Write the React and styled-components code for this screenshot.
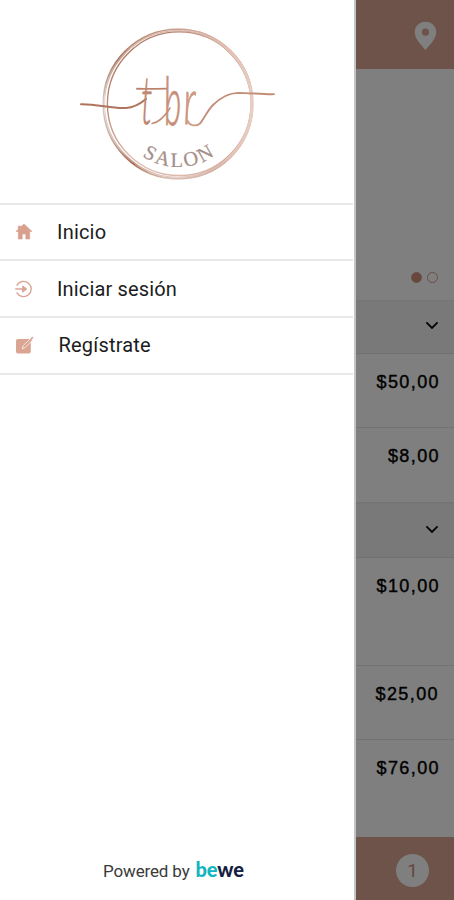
import React from 'react'
import styled, { createGlobalStyle } from 'styled-components'

const GlobalStyle = createGlobalStyle`
    * { box-sizing: border-box; }
    body {
        margin: 0;
        background: #fff;
        font-family: Roboto, "Liberation Sans", sans-serif;
    }
`

const Screen = styled.div`
    display: flex;
    width: 454px;
    height: 900px;
    overflow: hidden;
`

const Drawer = styled.nav`
    display: flex;
    flex-direction: column;
    width: 356px;
    background: #fff;
    border-right: 2px solid #c4c4c4;
`

const LogoBox = styled.div`
    height: 202.6px;
    svg { display: block; }
`

const Menu = styled.ul`
    list-style: none;
    margin: 0 1px 0 0;
    padding: 0;
    border-top: 2px solid #e9e9e9;
`

const MenuItem = styled.li`
    display: flex;
    align-items: center;
    height: 56.7px;
    padding-left: 14px;
    border-bottom: 2px solid #e9e9e9;
    svg { flex: none; }
`

const MenuLabel = styled.span`
    margin-left: ${props => props.$indent || 23}px;
    font-size: 20px;
    line-height: 24px;
    letter-spacing: ${props => props.$spacing || 0}px;
    color: #1c1c1c;
`

const Powered = styled.div`
    display: flex;
    align-items: baseline;
    margin-top: auto;
    padding: 0 0 18px 103px;
    font-size: 17px;
    line-height: 22px;
    letter-spacing: -0.15px;
    color: #3a3a3a;
`

const Brand = styled.span`
    margin-left: 6px;
    font-family: Lato, sans-serif;
    font-weight: 900;
    font-size: 20px;
    letter-spacing: -0.1px;
    color: #12b5c0;
    b { color: #14203f; font-weight: 900; }
`

const Page = styled.main`
    position: relative;
    display: flex;
    flex-direction: column;
    flex: 1;
    background: #fff;
`

const Scrim = styled.div`
    position: absolute;
    inset: 0;
    background: rgba(0, 0, 0, 0.5);
`

const TopBar = styled.header`
    display: flex;
    justify-content: flex-end;
    height: 69px;
    padding: 21px 17px 0 0;
    background: #dba792;
`

const Slider = styled.div`
    display: flex;
    justify-content: flex-end;
    align-items: flex-end;
    gap: 5px;
    height: 231px;
    padding: 0 16px 17px 0;
`

const Dot = styled.span`
    width: 11px;
    height: 11px;
    border-radius: 50%;
    border: 1.5px solid #d39c8b;
    background: ${props => props.$active ? '#d08f7b' : 'transparent'};
`

const Section = styled.div`
    display: flex;
    justify-content: flex-end;
    align-items: center;
    height: ${props => props.$height}px;
    padding: 0 15px 3px 0;
    background: #f3f3f3;
    border-top: 1px solid #ececec;
    border-bottom: 1px solid #e0e0e0;
`

const PriceRow = styled.div`
    height: ${props => props.$height}px;
    padding: 17px ${props => props.$right || 14}px 0 0;
    border-bottom: ${props => props.$last ? 'none' : '1px solid #e6e6e6'};
    text-align: right;
    font-family: "Liberation Sans", Arial, sans-serif;
    font-size: 18px;
    line-height: 22px;
    letter-spacing: 1.4px;
    color: #000;
    -webkit-text-stroke: 0.4px #000;
`

const BottomBar = styled.footer`
    display: flex;
    justify-content: flex-end;
    height: 63px;
    padding: 17px 25px 0 0;
    background: #dba792;
`

const Count = styled.span`
    width: 33px;
    height: 33px;
    border-radius: 50%;
    background: #fff;
    color: #cf907b;
    font-size: 19px;
    line-height: 34px;
    text-align: center;
`

const Initial = styled.text`
    font-family: Lato, sans-serif;
    font-style: italic;
    font-weight: 300;
    fill: ${props => props.$tone};
    stroke: ${props => props.$tone};
    stroke-width: ${props => props.$weight || 0.4}px;
`

const Logo = () => (
    <svg width="353" height="203" viewBox="0 0 353 203">
        <defs>
            <linearGradient id="ring" x1="0.1" y1="0" x2="0.85" y2="1">
                <stop offset="0" stopColor="#a9745f" />
                <stop offset="0.3" stopColor="#bd8c79" />
                <stop offset="0.6" stopColor="#dfbeb1" />
                <stop offset="1" stopColor="#d9b7a9" />
            </linearGradient>
            <linearGradient id="ringSide" x1="0" y1="0" x2="0" y2="1">
                <stop offset="0" stopColor="#c59886" />
                <stop offset="0.2" stopColor="#a97762" />
                <stop offset="0.5" stopColor="#d5cecb" />
                <stop offset="0.72" stopColor="#c8aca1" />
                <stop offset="0.9" stopColor="#a46a53" />
                <stop offset="1" stopColor="#dcc0b6" />
            </linearGradient>
            <linearGradient id="ringRight" x1="0" y1="0" x2="1" y2="0">
                <stop offset="0.4" stopColor="#d9b3a5" stopOpacity="0" />
                <stop offset="0.85" stopColor="#e3c3b7" />
                <stop offset="1" stopColor="#e8cdc3" />
            </linearGradient>
        </defs>
        <circle cx="178" cy="104" r="74.8" fill="none" stroke="url(#ringSide)" strokeWidth="1.5" />
        <circle cx="179.2" cy="103.7" r="71.8" fill="none" stroke="url(#ring)" strokeWidth="1.4" />
        <circle cx="177.8" cy="104" r="73.2" fill="none" stroke="url(#ringSide)" strokeWidth="1.1" opacity="0.75" />
        <circle cx="178" cy="104" r="74" fill="none" stroke="url(#ringRight)" strokeWidth="3" />
        {/* flourishes on both sides of the initials */}
        <path d="M81 104.3C98 104 112 109 126 108C134 107.5 140 104 146 99" fill="none" stroke="#b0745d" strokeWidth="2" strokeLinecap="round" />
        <path d="M200 123.5C204 119 207 111 213 105C221 97 229 93 238 92.8C250 92.8 262 94.5 274 94.2" fill="none" stroke="#c48d78" strokeWidth="1.8" strokeLinecap="round" />
        <path d="M137 88.8C147 89 157 88.8 167 88.6" fill="none" stroke="#bd846d" strokeWidth="1.9" strokeLinecap="round" />
        <path d="M152 123.5C159 122.5 165 116 170 108" fill="none" stroke="#c38b75" strokeWidth="1.5" strokeLinecap="round" />
        <path d="M188 121C189 125.5 196 127 200 123.5" fill="none" stroke="#cf9984" strokeWidth="1.7" strokeLinecap="round" />
        <Initial $tone="#bf8670" fontSize="67" transform="translate(141 124) scale(0.5 1)">t</Initial>
        <Initial $tone="#c78f79" $weight={0.9} fontSize="67" transform="translate(165 125) skewX(3) scale(0.5 1)">b</Initial>
        <Initial $tone="#cf9984" $weight={0.9} fontSize="64" transform="translate(184 124) skewX(2) scale(0.6 1)">r</Initial>
        <path id="arc" d="M115 104A63 63 0 0 0 241 104" fill="none" />
        <text fontFamily="Liberation Serif, serif" fontSize="20.5" letterSpacing="2.2" fill="#a78f89" stroke="#a78f89" strokeWidth="0.2" textAnchor="middle">
            <textPath href="#arc" startOffset="50.8%">SALON</textPath>
        </text>
    </svg>
)

const HomeIcon = () => (
    <svg width="20" height="20" viewBox="0 0 20 20">
        <path d="M10 2L18 9.4H15.7V17H11.8V12H8.2V17H4.3V9.4H2L4.3 7.2V4H6.6V5.1Z" fill="#d9a08d" stroke="#d9a08d" strokeWidth="0.6" strokeLinejoin="round" />
    </svg>
)

const LoginIcon = () => (
    <svg width="20" height="20" viewBox="0 0 20 20" fill="none" stroke="#dba594" strokeWidth="1.4" strokeLinecap="round" strokeLinejoin="round">
        <path d="M3 6.2A7.6 7.6 0 1 1 3 13.8" />
        <path d="M1.8 10H11.6" />
        <path d="M8.8 7.2L12.3 10L8.8 12.8Z" fill="#dba594" />
    </svg>
)

const EditIcon = () => (
    <svg width="20" height="20" viewBox="0 0 20 20">
        <rect x="2" y="4" width="14.8" height="14.6" rx="2" fill="#dba594" />
        <path d="M8.2 13.8L9.2 10.6L16.8 3.3L18.6 5L11.2 12.6Z" fill="#dba594" stroke="#fff" strokeWidth="0.7" />
        <path d="M17.3 3.6L18.5 2.6" stroke="#dba594" strokeWidth="1.6" strokeLinecap="round" />
    </svg>
)

const PinIcon = () => (
    <svg width="23" height="30" viewBox="0 0 23 30">
        <path fillRule="evenodd" d="M11.5 .8C5.4 .8 .8 5.4 .8 11.3C.8 18.6 8 24.4 11.5 29.2C15 24.4 22.2 18.6 22.2 11.3C22.2 5.4 17.6 .8 11.5 .8ZM11.5 7.6A3.6 3.6 0 1 1 11.5 14.8A3.6 3.6 0 1 1 11.5 7.6Z" fill="#fff" />
    </svg>
)

const Chevron = () => (
    <svg width="14" height="9" viewBox="0 0 14 9">
        <path d="M1.4 1.4L7 7L12.6 1.4" fill="none" stroke="#000" strokeWidth="1.8" />
    </svg>
)

class App extends React.Component {
    render() {
        const items = [
            { label: 'Inicio', icon: <HomeIcon />, spacing: 0.2 },
            { label: 'Iniciar sesión', icon: <LoginIcon />, spacing: 0.15 },
            { label: 'Regístrate', icon: <EditIcon />, indent: 24.5, spacing: 0.2 },
        ]

        return (
            <Screen>
                <GlobalStyle />
                <Drawer>
                    <LogoBox><Logo /></LogoBox>
                    <Menu>
                        {items.map(item => (
                            <MenuItem key={item.label}>
                                {item.icon}
                                <MenuLabel $indent={item.indent} $spacing={item.spacing}>{item.label}</MenuLabel>
                            </MenuItem>
                        ))}
                    </Menu>
                    <Powered>Powered by<Brand>be<b>we</b></Brand></Powered>
                </Drawer>

                <Page>
                    <TopBar><PinIcon /></TopBar>
                    <Slider>
                        <Dot $active />
                        <Dot />
                    </Slider>
                    <Section $height={54}><Chevron /></Section>
                    <PriceRow $height={74}>$50,00</PriceRow>
                    <PriceRow $height={75}>$8,00</PriceRow>
                    <Section $height={55}><Chevron /></Section>
                    <PriceRow $height={108}>$10,00</PriceRow>
                    <PriceRow $height={74} $right={15}>$25,00</PriceRow>
                    <PriceRow $height={97} $last>$76,00</PriceRow>
                    <BottomBar><Count>1</Count></BottomBar>
                    <Scrim />
                </Page>
            </Screen>
        )
    }
}

export default App
